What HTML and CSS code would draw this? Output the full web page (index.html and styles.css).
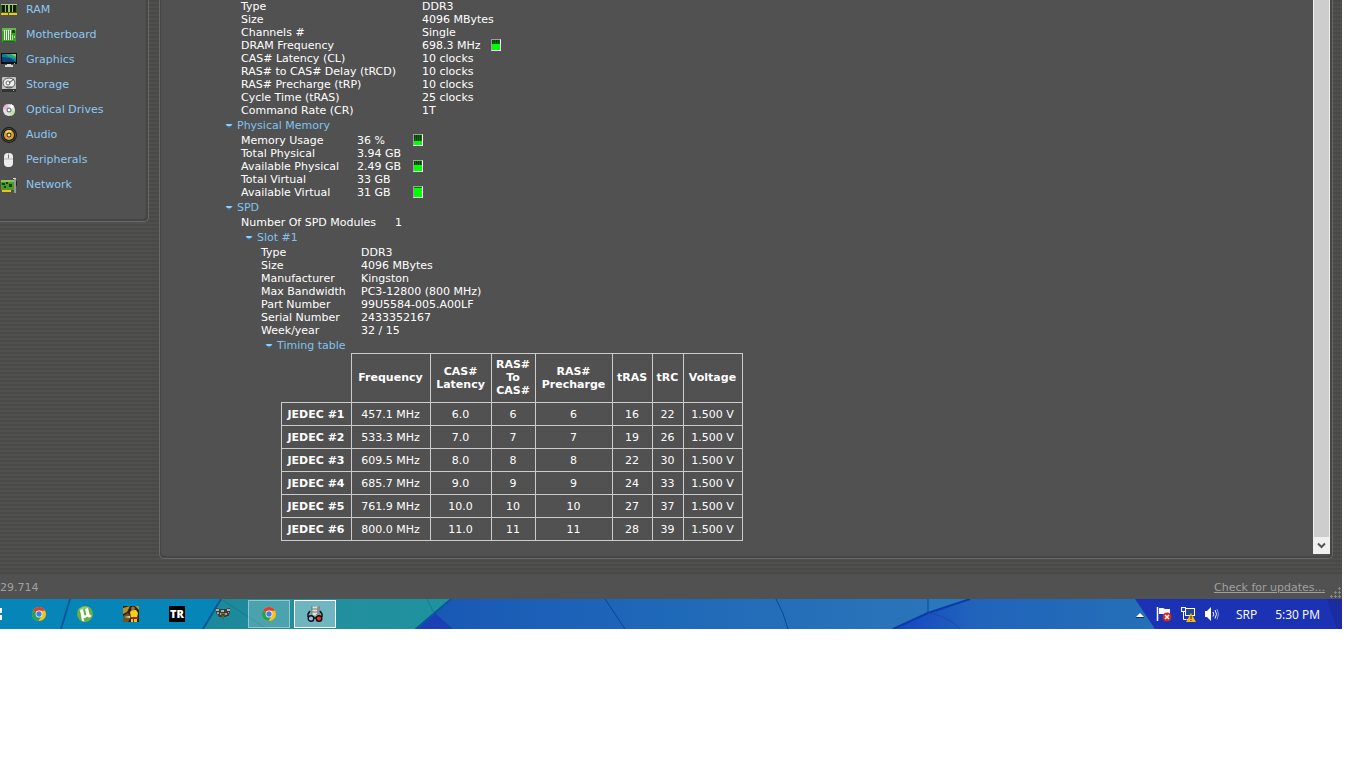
FILE: index.html
```html
<!DOCTYPE html>
<html lang="en">
  <head>
    <meta charset="UTF-8" />
    <meta name="viewport" content="width=device-width, initial-scale=1.0" />
    <title>Speccy - RAM</title>
    <link rel="stylesheet" href="styles.css">
  </head>
  <body>
    <div class="workspace">
      <nav class="sidebar">
        <a href="#ram">
          <svg class="icon" viewBox="0 2 16 16">
            <rect y="4" width="16" height="11" fill="#2c6b12" />
            <rect y="4" width="16" height="1" fill="#a8cf8a" />
            <path d="M1 5h3v7H1zM5 5h2v7H5zM9 5h2v7H9zM12 5h3v7h-3z" fill="#161a12" />
            <path d="M4 5h1v7H4zM7 5h2v7H7zM11 5h1v7h-1z" fill="#8fc957" />
            <rect y="13" width="16" height="2" fill="#f6c417" />
            <rect x="7" y="13" width="1" height="2" fill="#6b5310" />
          </svg>
          RAM
        </a>
        <a href="#motherboard">
          <svg class="icon" viewBox="0 0 16 16">
            <rect x="1" y="1" width="14" height="14" fill="#3f9d2b" />
            <path d="M1 1h14v3H1z" fill="#63b94c" />
            <path d="M3 3h1v10H3zM5 3h1v10H5zM7 3h1v10H7zM9 3h1v10H9z" fill="#f2f8ee" />
            <path d="M11 3h3v3h-3z" fill="#23421c" />
            <path d="M11 8h1v5h-1zM13 9h1v2h-1z" fill="#a3e889" />
            <path d="M2 14h12v1H2z" fill="#1f6a18" />
          </svg>
          Motherboard
        </a>
        <a href="#graphics">
          <svg class="icon" viewBox="0 1 16 16">
            <rect y="2" width="16" height="11" fill="#0b0d10" />
            <rect x="1" y="3" width="14" height="8" fill="#16779a" />
            <path d="M4 3h11v5L8 6z" fill="#27a27c" />
            <path d="M10 3h5v3z" fill="#8ccf6b" />
            <path d="M1 6l8 1 6 4H1z" fill="#0c4378" />
            <path d="M6 13h4v1h2v2H4v-2h2z" fill="#cfd3d6" />
            <rect x="13" y="12" width="1" height="1" fill="#3fe04a" />
          </svg>
          Graphics
        </a>
        <a href="#storage">
          <svg class="icon" viewBox="0 1 16 16">
            <rect x="1" y="1" width="14" height="15" rx="1" fill="#c3c3c3" />
            <rect x="1" y="13" width="14" height="3" fill="#333" />
            <ellipse cx="8" cy="7" rx="6" ry="5" fill="#efefef" stroke="#555" />
            <circle cx="7" cy="7" r="2" fill="#fff" stroke="#666" />
            <path d="M8 7l5-4M5 11h6" stroke="#444" fill="none" />
            <rect x="12" y="14" width="1" height="1" fill="#3fe0c0" />
          </svg>
          Storage
        </a>
        <a href="#optical">
          <svg class="icon" viewBox="0 1 16 16">
            <circle cx="8" cy="9" r="6" fill="#e4e1e4" />
            <path d="M8 9L2 8a6 6 0 0 1 4-5z" fill="#e8b6d9" />
            <path d="M8 9l6 1a6 6 0 0 1-4 5z" fill="#bfe3a0" />
            <path d="M8 9l2-6a6 6 0 0 1 3 3z" fill="#fff" />
            <circle cx="8" cy="9" r="2.500" fill="#777" />
            <circle cx="8" cy="9" r="1.300" fill="#fff" />
          </svg>
          Optical Drives
        </a>
        <a href="#audio">
          <svg class="icon" viewBox="0 1 16 16">
            <circle cx="8" cy="9" r="7.900" fill="#171717" />
            <circle cx="8" cy="9" r="6.500" fill="none" stroke="#5a5a5a" stroke-width=".8" />
            <circle cx="8" cy="9" r="5" fill="#d9a520" />
            <path d="M8 9L4 6a5 5 0 0 1 7-1z" fill="#f0cc56" />
            <circle cx="8" cy="9" r="2.400" fill="#2a230f" />
            <circle cx="8" cy="9" r="1.500" fill="#e8e2c8" />
          </svg>
          Audio
        </a>
        <a href="#peripherals">
          <svg class="icon" viewBox="0 1 16 16">
            <rect x="3" y="2" width="9" height="14" rx="4" fill="#ececec" />
            <path d="M3 8h9M7.500 2v6" stroke="#b5b5b5" fill="none" />
            <rect x="7" y="4" width="1" height="3" fill="#777" />
          </svg>
          Peripherals
        </a>
        <a href="#network">
          <svg class="icon" viewBox="0 1 16 16">
            <rect y="4" width="13" height="10" fill="#4c9a2a" />
            <rect y="4" width="13" height="2" fill="#84c45e" />
            <path d="M1 7h3v2H1zM5 6h2v2H5zM8 8h3v3H8zM3 10h2v2H3z" fill="#1d3d10" />
            <rect x="1" y="14" width="9" height="2" fill="#f3c01e" />
            <path d="M12 2.500h3M14 2v15" stroke="#dcdcdc" fill="none" />
            <path d="M15.500 5v5" stroke="#222" fill="none" />
          </svg>
          Network
        </a>
      </nav>

      <main class="panel">
        <div class="content">
          <div class="section">
            <div class="section-body">
              <table class="props timing-props">
                <tr><th scope="row">Type</th><td>DDR3</td></tr>
                <tr><th scope="row">Size</th><td>4096 MBytes</td></tr>
                <tr><th scope="row">Channels #</th><td>Single</td></tr>
                <tr>
                  <th scope="row">DRAM Frequency</th>
                  <td><div class="value">698.3 MHz <span class="gauge gauge-mid"></span></div></td>
                </tr>
                <tr><th scope="row">CAS# Latency (CL)</th><td>10 clocks</td></tr>
                <tr><th scope="row">RAS# to CAS# Delay (tRCD)</th><td>10 clocks</td></tr>
                <tr><th scope="row">RAS# Precharge (tRP)</th><td>10 clocks</td></tr>
                <tr><th scope="row">Cycle Time (tRAS)</th><td>25 clocks</td></tr>
                <tr><th scope="row">Command Rate (CR)</th><td>1T</td></tr>
              </table>
            </div>
          </div>

          <div class="section">
            <button class="toggle" type="button">
              <svg class="arrow" viewBox="0 0 8 6"><path d="M0 2h8L4 6z" fill="#2f86cc" /><path d="M1 2h6L6 4H2z" fill="#8fd0fb" /></svg>
              Physical Memory
            </button>
            <div class="section-body">
              <table class="props memory-props">
                <tr><th scope="row">Memory Usage</th><td>36 %</td><td class="meter"><span class="gauge gauge-low"></span></td></tr>
                <tr><th scope="row">Total Physical</th><td>3.94 GB</td><td class="meter"></td></tr>
                <tr><th scope="row">Available Physical</th><td>2.49 GB</td><td class="meter"><span class="gauge gauge-mid"></span></td></tr>
                <tr><th scope="row">Total Virtual</th><td>33 GB</td><td class="meter"></td></tr>
                <tr><th scope="row">Available Virtual</th><td>31 GB</td><td class="meter"><span class="gauge gauge-full"></span></td></tr>
              </table>
            </div>
          </div>

          <div class="section">
            <button class="toggle" type="button">
              <svg class="arrow" viewBox="0 0 8 6"><path d="M0 2h8L4 6z" fill="#2f86cc" /><path d="M1 2h6L6 4H2z" fill="#8fd0fb" /></svg>
              SPD
            </button>
            <div class="section-body">
              <table class="props spd-props">
                <tr><th scope="row">Number Of SPD Modules</th><td>1</td></tr>
              </table>

              <div class="section">
                <button class="toggle" type="button">
                  <svg class="arrow" viewBox="0 0 8 6"><path d="M0 2h8L4 6z" fill="#2f86cc" /><path d="M1 2h6L6 4H2z" fill="#8fd0fb" /></svg>
                  Slot #1
                </button>
                <div class="section-body">
                  <table class="props slot-props">
                    <tr><th scope="row">Type</th><td>DDR3</td></tr>
                    <tr><th scope="row">Size</th><td>4096 MBytes</td></tr>
                    <tr><th scope="row">Manufacturer</th><td>Kingston</td></tr>
                    <tr><th scope="row">Max Bandwidth</th><td>PC3-12800 (800 MHz)</td></tr>
                    <tr><th scope="row">Part Number</th><td>99U5584-005.A00LF</td></tr>
                    <tr><th scope="row">Serial Number</th><td>2433352167</td></tr>
                    <tr><th scope="row">Week/year</th><td>32 / 15</td></tr>
                  </table>

                  <div class="section">
                    <button class="toggle" type="button">
                      <svg class="arrow" viewBox="0 0 8 6"><path d="M0 2h8L4 6z" fill="#2f86cc" /><path d="M1 2h6L6 4H2z" fill="#8fd0fb" /></svg>
                      Timing table
                    </button>
                    <div class="section-body">
                      <table class="timings">
                        <colgroup>
                          <col class="col-name"><col class="col-freq"><col class="col-cas"><col class="col-ras">
                          <col class="col-pre"><col class="col-tras"><col class="col-trc"><col class="col-volt">
                        </colgroup>
                        <thead>
                          <tr>
                            <td class="corner"></td>
                            <th scope="col">Frequency</th>
                            <th scope="col">CAS#<br>Latency</th>
                            <th scope="col">RAS#<br>To<br>CAS#</th>
                            <th scope="col">RAS#<br>Precharge</th>
                            <th scope="col">tRAS</th>
                            <th scope="col">tRC</th>
                            <th scope="col">Voltage</th>
                          </tr>
                        </thead>
                        <tbody>
                          <tr><th scope="row">JEDEC #1</th><td>457.1 MHz</td><td>6.0</td><td>6</td><td>6</td><td>16</td><td>22</td><td>1.500 V</td></tr>
                          <tr><th scope="row">JEDEC #2</th><td>533.3 MHz</td><td>7.0</td><td>7</td><td>7</td><td>19</td><td>26</td><td>1.500 V</td></tr>
                          <tr><th scope="row">JEDEC #3</th><td>609.5 MHz</td><td>8.0</td><td>8</td><td>8</td><td>22</td><td>30</td><td>1.500 V</td></tr>
                          <tr><th scope="row">JEDEC #4</th><td>685.7 MHz</td><td>9.0</td><td>9</td><td>9</td><td>24</td><td>33</td><td>1.500 V</td></tr>
                          <tr><th scope="row">JEDEC #5</th><td>761.9 MHz</td><td>10.0</td><td>10</td><td>10</td><td>27</td><td>37</td><td>1.500 V</td></tr>
                          <tr><th scope="row">JEDEC #6</th><td>800.0 MHz</td><td>11.0</td><td>11</td><td>11</td><td>28</td><td>39</td><td>1.500 V</td></tr>
                        </tbody>
                      </table>
                    </div>
                  </div>
                </div>
              </div>
            </div>
          </div>
        </div>

        <div class="scrollbar">
          <div class="thumb"></div>
          <button class="scroll-down" type="button" aria-label="Scroll down">
            <svg width="9" height="7" viewBox="0 0 9 7"><path d="M1 1.500L4.500 5 8 1.500" fill="none" stroke="#555" stroke-width="2" /></svg>
          </button>
        </div>
      </main>
    </div>

    <footer class="statusbar">
      <span>29.714</span>
      <a href="#updates">Check for updates...</a>
      <svg class="grip" width="12" height="12" viewBox="0 0 12 12">
        <path d="M9.500 0v3M8 1.500h3M9.500 4v3M8 5.500h3M5.500 4v3M4 5.500h3M9.500 8v3M8 9.500h3M5.500 8v3M4 9.500h3M1.500 8v3M0 9.500h3" stroke="#858585" fill="none" />
      </svg>
    </footer>

    <div class="taskbar">
      <svg class="wallpaper" viewBox="0 0 1342 30" preserveAspectRatio="none">
        <defs>
          <linearGradient id="teal"><stop offset="0" stop-color="#1b889b" /><stop offset=".5" stop-color="#238f9e" /><stop offset="1" stop-color="#1f929f" /></linearGradient>
          <linearGradient id="blue"><stop offset="0" stop-color="#1857b5" /><stop offset=".5" stop-color="#1f69b9" /><stop offset="1" stop-color="#2a75b9" /></linearGradient>
          <linearGradient id="deep"><stop offset="0" stop-color="#1545c4" /><stop offset=".3" stop-color="#2063bc" /><stop offset="1" stop-color="#2570b7" /></linearGradient>
        </defs>
        <rect width="1342" height="30" fill="#0585b8" />
        <path d="M221 0h229l-35 30H203z" fill="url(#teal)" />
        <path d="M450 0h478v14l-35 16H415z" fill="url(#blue)" />
        <path d="M415 30l19-16 18 16z" fill="#1c3fb8" />
        <path d="M928 0h207l20 30H893l35-16z" fill="url(#deep)" />
        <path d="M928 0h42l-42 14z" fill="#2878be" />
        <path d="M1135 0h207v30h-187z" fill="#1c32b5" />
        <path d="M1327 0h15v30h-5z" fill="#1b2ba0" />
        <path d="M893 30l35-16 42-14" fill="none" stroke="#0a3bab" stroke-width="2" />
        <path d="M928 14q20 3 32 16" fill="none" stroke="#2544b0" />
        <path d="M70 0l-9 30M221 0l-18 30M451 0l-35 30" fill="none" stroke="#07599b" stroke-width="2" />
        <path d="M221 0l46 30M427 0l7 14" fill="none" stroke="#127b8c" />
        <path d="M434 14l18 16M605 0l20 30M776 0q8 14 12 30M928 0v14" fill="none" stroke="#0a43a0" />
      </svg>

      <div class="tasks">
        <button class="start" type="button" aria-label="Start">
          <svg width="2" height="14" viewBox="0 0 2 14"><path d="M0 1h2v5H0zM0 8h2v5H0z" fill="#fff" /></svg>
        </button>
        <button class="task" type="button" aria-label="Chrome">
          <svg class="icon" viewBox="0 0 16 16">
            <circle cx="8" cy="8" r="7" fill="#fbc116" />
            <path d="M8 8L2 4.400A7 7 0 0 1 14.100 4.700H8z" fill="#e33b2e" />
            <path d="M8 8L2 4.400A7 7 0 0 0 7.400 15L10.500 10z" fill="#23a154" />
            <circle cx="8" cy="8" r="3.400" fill="#fff" /><circle cx="8" cy="8" r="2.700" fill="#3f7ee8" />
          </svg>
        </button>
        <button class="task" type="button" aria-label="uTorrent">
          <svg class="icon" viewBox="0 0 16 16">
            <circle cx="8" cy="8" r="8" fill="#67b043" />
            <path d="M1 5a8 8 0 0 1 12-3C9 2 4 4 1 5z" fill="#91c973" />
            <path d="M3 4l3-1 1 5q.5 2 1.500 1.500T9 7L8 3l3-1 1.500 6q.5 1.500 2 1l-.5 2q-2.500 1-4-.5Q8.500 12.500 6.500 12l1 3.500-2.500-.500z" fill="#fff" />
          </svg>
        </button>
        <button class="task" type="button" aria-label="Football">
          <svg class="icon" viewBox="0 0 16 16">
            <rect width="16" height="16" fill="#2a2312" />
            <path d="M0 2l7-2-3 6-4 2zM12 0h4v4z" fill="#b89126" />
            <path d="M0 10l5-3 3 4-3 5H0z" fill="#6b5524" />
            <path d="M7 6l2-2h4l2 3-1 5H8z" fill="#f2cf1a" />
            <circle cx="10" cy="2.500" r="2" fill="#a26a45" />
            <path d="M8 11h7v2H8z" fill="#b3201c" />
            <path d="M8 13h6v3H8z" fill="#efc812" />
            <path d="M10.500 13v3" stroke="#4a3a10" />
            <path d="M1 11l6-1v2z" fill="#eed9b0" />
          </svg>
        </button>
        <button class="task" type="button" aria-label="Tomb Raider"><span class="tr-logo">TR</span></button>
        <button class="task" type="button" aria-label="GTA V">
          <svg class="icon" viewBox="0 0 16 16">
            <path d="M1 2l4 1h6l4-1v5l-1 1v2h-2l-1 1H9l-1 3-1-3H4l-1-2L1 7z" fill="#373c36" />
            <path d="M1 3h3v2H1zM12 3h3v2h-3zM6 4h3v2H6z" fill="#a9b2ae" />
            <path d="M2 6h2v2H2zM5 7h1v2H5zM10 7h2v2h-2zM13 6h1v1h-1z" fill="#b69b92" />
            <path d="M6 7h4l-2 7z" fill="#5f7b43" />
            <path d="M7 8h2l-1 3z" fill="#263222" />
          </svg>
        </button>
        <button class="task open" type="button" aria-label="Chrome window">
          <svg class="icon" viewBox="0 0 16 16">
            <circle cx="8" cy="8" r="7" fill="#fbc116" />
            <path d="M8 8L2 4.400A7 7 0 0 1 14.100 4.700H8z" fill="#e33b2e" />
            <path d="M8 8L2 4.400A7 7 0 0 0 7.400 15L10.500 10z" fill="#23a154" />
            <circle cx="8" cy="8" r="3.400" fill="#fff" /><circle cx="8" cy="8" r="2.700" fill="#3f7ee8" />
          </svg>
        </button>
        <button class="task open active" type="button" aria-label="Speccy">
          <svg class="icon" viewBox="0 0 16 16">
            <rect x="5" y="0" width="7" height="10" fill="#e0e0e0" stroke="#4b4b4b" stroke-width=".6" />
            <path d="M5 3h6M5 6h6" stroke="#777" fill="none" />
            <path d="M10 1h2v9h-2z" fill="#8e8e8e" />
            <rect x="9" y="8" width="1" height="1" fill="#45c730" />
            <path d="M1 11V8l2-3M15 11V8l-2-3M7 12h2" fill="none" stroke="#151515" stroke-width="1.500" />
            <circle cx="4" cy="12.500" r="2.800" fill="#9dbbe2" stroke="#111" stroke-width="1.400" />
            <circle cx="12" cy="12.500" r="2.800" fill="#e8312e" stroke="#111" stroke-width="1.400" />
          </svg>
        </button>
      </div>

      <div class="tray">
        <button class="tray-button" type="button" aria-label="Show hidden icons">
          <svg width="8" height="16" viewBox="0 0 8 16"><path d="M0 11l4-4 4 4z" fill="#fff" /><path d="M0 11.500h8" stroke="#0c2c70" /></svg>
        </button>
        <button class="tray-button" type="button" aria-label="Action Center">
          <svg class="icon" viewBox="0 0 16 16">
            <path d="M1.500 1v14" stroke="#fff" stroke-width="1.500" />
            <path d="M3 2h4l2 1h5v6H9L7 8H3z" fill="#f5f7fb" />
            <circle cx="11" cy="11" r="4.500" fill="#d8271c" />
            <path d="M9 9l4 4M13 9l-4 4" stroke="#fff" stroke-width="1.500" />
          </svg>
        </button>
        <button class="tray-button" type="button" aria-label="Network">
          <svg class="icon" viewBox="0 0 16 16">
            <rect x="5.500" y="2.500" width="9" height="7" fill="#24459b" stroke="#fff" />
            <path d="M7 13.500h4" stroke="#fff" />
            <rect x="1.500" y="1.500" width="4" height="4" fill="#24459b" stroke="#fff" />
            <path d="M3.500 6v7.500h3" fill="none" stroke="#fff" />
            <path d="M11 7l5 9H6z" fill="#f7b90c" />
            <path d="M11 10v3M11 14v1" stroke="#2b2200" />
          </svg>
        </button>
        <button class="tray-button" type="button" aria-label="Volume">
          <svg class="icon" viewBox="0 0 16 16">
            <path d="M1 5h2l4-4v14l-4-4H1z" fill="#fff" />
            <path d="M9 6q1.500 2 0 4.500M11 4q3 4 0 8.500" fill="none" stroke="#fff" />
            <path d="M13 3q3 5 0 10.500" fill="none" stroke="#a9b5e2" stroke-width=".8" />
          </svg>
        </button>
        <span class="lang">SRP</span>
        <span class="clock">5:30 PM</span>
      </div>
    </div>
  </body>
</html>
```
FILE: styles.css
```css
body {
  margin: 0;
  padding-right: 24px;
  background: #fff;
  color: #fff;
  font-family: Verdana, "DejaVu Sans", sans-serif;
  font-size: 11px;
  line-height: 13px;
}
button {
  margin: 0;
  padding: 0;
  border: none;
  background: none;
  color: inherit;
  font: inherit;
  cursor: pointer;
}
svg {
  display: block;
  flex: none;
}
table {
  border-collapse: collapse;
}
.icon {
  width: 16px;
  height: 16px;
}

/* Window body */
.workspace {
  display: flex;
  align-items: flex-start;
  gap: 10px;
  padding: 0 9px 16px 0;
  background: repeating-linear-gradient(#494947 0 2px, #4f4f4e 2px 4px);
}
.sidebar,
.panel {
  box-sizing: border-box;
  background: #515151;
  border: 1px solid #686868;
  border-top: none;
  box-shadow: inset -2px -2px 1px #454545;
}
.sidebar {
  display: flex;
  flex-direction: column;
  gap: 7px;
  width: 149px;
  padding: 1px 0 27px 1px;
  border-left: none;
  border-radius: 0 0 5px 0;
}
.sidebar a {
  display: flex;
  align-items: center;
  gap: 9px;
  line-height: 18px;
  color: #8cc8f4;
  text-decoration: none;
}
.panel {
  display: flex;
  flex: 1;
  padding-right: 2px;
  border-radius: 0 0 5px 5px;
  box-shadow: inset 1px -2px 1px #454545, inset -2px 0 1px #454545;
}
.content {
  flex: 1;
  padding: 0 0 17px 49px;
}

/* Tree sections */
.section {
  margin-left: 4px;
}
.content > .section {
  margin-left: 16px;
}
.section-body {
  padding-left: 16px;
}
.toggle {
  display: flex;
  align-items: center;
  gap: 4px;
  height: 16px;
  color: #7fc4ee;
}
.arrow {
  width: 8px;
  height: 6px;
}
.toggle + .section-body > .props {
  margin-top: 1px;
}
.props th,
.props td {
  padding: 0;
  font-weight: normal;
  text-align: left;
  vertical-align: top;
  white-space: nowrap;
}
.timing-props th {
  min-width: 181px;
}
.memory-props th {
  min-width: 116px;
}
.memory-props td {
  min-width: 56px;
}
.spd-props th {
  min-width: 154px;
}
.slot-props th {
  min-width: 100px;
}
.value {
  display: flex;
  gap: 10px;
}
.gauge {
  display: block;
  box-sizing: border-box;
  width: 10px;
  height: 12px;
  border: 1px solid #fff;
  border-top-color: #a0a0a0;
  border-left-color: #a0a0a0;
  background: #0f0;
}
.gauge-mid {
  background: repeating-linear-gradient(90deg, #003800 0 1px, #007800 1px 2px) 0 0 / 100% 4px no-repeat, #0f0;
}
.gauge-low {
  background: repeating-linear-gradient(90deg, #003800 0 1px, #007800 1px 2px) 0 0 / 100% 6px no-repeat, #0f0;
}
.gauge-full {
  background: linear-gradient(#008000, #008000) 0 0 / 100% 1px no-repeat, #0f0;
}

/* Timing table */
.timings {
  table-layout: fixed;
  width: 462px;
}
.timings th,
.timings td {
  padding: 5px 1px 4px 0;
  border: 1px solid #ccc;
  text-align: center;
  white-space: nowrap;
}
.timings thead th {
  padding: 4px 1px 5px 0;
}
.timings .corner {
  border-top: none;
  border-left: none;
}
.col-name { width: 70px; }
.col-freq { width: 79px; }
.col-cas { width: 61px; }
.col-ras { width: 44px; }
.col-pre { width: 77px; }
.col-tras { width: 40px; }
.col-trc { width: 31px; }
.col-volt { width: 59px; }

/* Scrollbar */
.scrollbar {
  display: flex;
  flex-direction: column;
  width: 17px;
  margin-bottom: 4px;
  background: #f0f0f0;
}
.thumb {
  flex: 1;
  margin: 0 1px;
  background: #cdcdcd;
}
.scroll-down {
  display: flex;
  align-items: center;
  justify-content: center;
  height: 17px;
}

/* Status bar */
.statusbar {
  position: relative;
  display: flex;
  align-items: center;
  justify-content: space-between;
  height: 24px;
  padding-right: 17px;
  background: #515151;
  color: #a0a0a0;
}
.statusbar a {
  color: #a0a0a0;
}
.grip {
  position: absolute;
  right: 0;
  bottom: 0;
}

/* Taskbar */
.taskbar {
  position: relative;
  display: flex;
  justify-content: space-between;
  height: 30px;
  font-family: "Segoe UI", "Open Sans", sans-serif;
  font-size: 12px;
}
.wallpaper {
  position: absolute;
  inset: 0;
  width: 100%;
  height: 100%;
}
.tasks,
.tray {
  position: relative;
  display: flex;
  align-items: center;
}
.tasks {
  gap: 4px;
}
.start {
  width: 14px;
}
.task {
  display: flex;
  box-sizing: border-box;
  align-items: center;
  justify-content: center;
  width: 42px;
  height: 28px;
}
.open {
  background: rgba(255, 255, 255, 0.2);
  border: 1px solid rgba(255, 255, 255, 0.4);
}
.active {
  background: rgba(255, 255, 255, 0.35);
  border-color: #fff;
}
.tr-logo {
  width: 16px;
  height: 16px;
  background: #000;
  color: #fff;
  font-family: "Open Sans", sans-serif;
  font-size: 11px;
  font-weight: 800;
  line-height: 16px;
}
.tray {
  gap: 8px;
  padding-right: 22px;
}
.tray-button {
  display: flex;
}
.tray-button:first-child {
  margin-right: 4px;
}
.lang {
  margin: 0 10px 0 8px;
}
```
